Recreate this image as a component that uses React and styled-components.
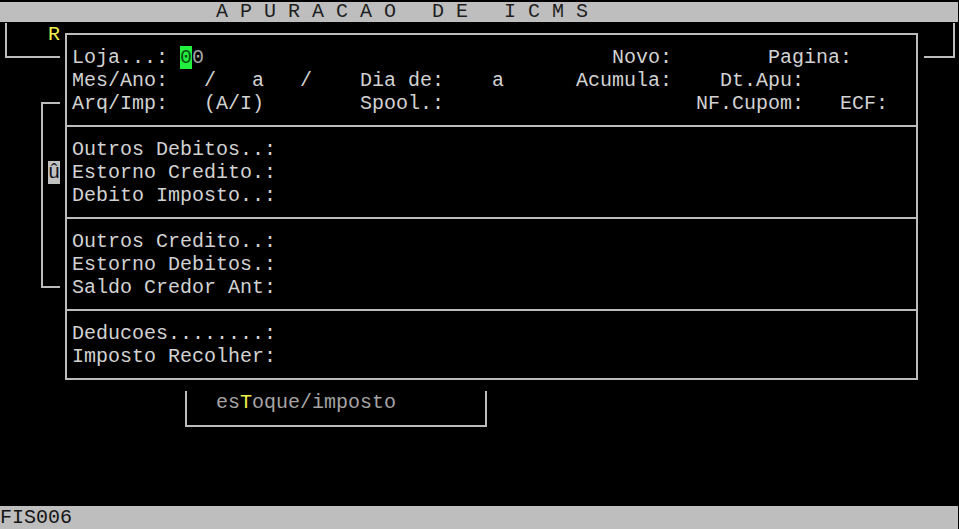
import React from 'react';
import styled, { createGlobalStyle } from 'styled-components';

const GlobalStyle = createGlobalStyle`
  html, body {
    margin: 0;
    padding: 0;
    background: #000;
    overflow: hidden;
  }
`;

// terminal cell grid: 80 cols x 23 rows, 12x23 px per cell
const place = ({ $row = 0, $col = 0, $w = 1, $h = 1 }) =>
  `grid-row: ${$row + 1} / span ${$h}; grid-column: ${$col + 1} / span ${$w};`;

const LINE = '#bcbcbc';

const Screen = styled.div`
  width: 959px;
  height: 529px;
  overflow: hidden;
  background: #000;
  display: grid;
  grid-template-columns: repeat(80, 12px);
  grid-template-rows: repeat(23, 23px);
  font-family: "Courier New", "Nimbus Mono PS", "FreeMono", "Liberation Mono", monospace;
  font-size: 20px;
  line-height: 23px;
  color: #d2d2d2;
`;

const TitleBar = styled.div`
  grid-row: 1;
  grid-column: 1 / span 80;
  margin: 2px 2px 1px 0;
  background: #bebebe;
  color: #1e1e1e;
  line-height: 20px;
  padding-left: 216px;
  white-space: pre;
`;

const StatusBar = styled.div`
  grid-row: 23;
  grid-column: 1 / span 80;
  margin-right: 2px;
  background: #bebebe;
  color: #141414;
  white-space: pre;
`;

const CornerFrame = styled.div`
  ${place};
  margin: 0 ${p => (p.$side === 'right' ? '5px' : '0')} 11px ${p => (p.$side === 'left' ? '5px' : '0')};
  border-bottom: 2px solid ${LINE};
  ${p => (p.$side === 'left' ? `border-left: 2px solid ${LINE};` : `border-right: 2px solid ${LINE};`)}
`;

const SideFrame = styled.div`
  ${place};
  margin: 10px 0 11px 5px;
  border: 2px solid ${LINE};
  border-right: none;
`;

const TrayFrame = styled.div`
  ${place};
  margin: 0 5px 10px 5px;
  border: 2px solid ${LINE};
  border-top: none;
`;

const MainBox = styled.div`
  ${place};
  margin: 10px 6px 11px 5px;
  border: 2px solid ${LINE};
`;

const Rule = styled.div`
  ${place};
  align-self: start;
  margin: 10px 6px 0 5px;
  height: 2px;
  background: ${LINE};
`;

const Label = styled.span`
  ${place};
  white-space: pre;
  color: ${p => p.$color || 'inherit'};
`;

const Hot = styled.span`
  color: #eeee4a;
`;

const Cursor = styled.span`
  ${place};
  background: #22ef3e;
  color: #0b4a12;
`;

const Marker = styled.span`
  ${place};
  background: #c0c0c0;
  color: #10121c;
`;

const fields = [
  [2, 6, 'Loja...:'], [2, 51, 'Novo:'], [2, 64, 'Pagina:'],
  [3, 6, 'Mes/Ano:'], [3, 17, '/'], [3, 21, 'a'], [3, 25, '/'],
  [3, 30, 'Dia de:'], [3, 41, 'a'], [3, 48, 'Acumula:'], [3, 60, 'Dt.Apu:'],
  [4, 6, 'Arq/Imp:'], [4, 17, '(A/I)'], [4, 30, 'Spool.:'],
  [4, 58, 'NF.Cupom:'], [4, 70, 'ECF:'],
  [6, 6, 'Outros Debitos..:'], [7, 6, 'Estorno Credito.:'], [8, 6, 'Debito Imposto..:'],
  [10, 6, 'Outros Credito..:'], [11, 6, 'Estorno Debitos.:'], [12, 6, 'Saldo Credor Ant:'],
  [14, 6, 'Deducoes........:'], [15, 6, 'Imposto Recolher:'],
];

export default function App() {
  return (
    <>
      <GlobalStyle />
      <Screen>
        <TitleBar>A P U R A C A O   D E   I C M S</TitleBar>

        {/* janelas de tras */}
        <CornerFrame $side="left" $row={1} $col={0} $w={5} $h={2} />
        <Label $row={1} $col={4} $color="#eeee4a">R</Label>
        <CornerFrame $side="right" $row={1} $col={77} $w={3} $h={2} />
        <SideFrame $row={4} $col={3} $w={2} $h={9} />
        <Marker $row={7} $col={4}>û</Marker>
        <TrayFrame $row={17} $col={15} $w={26} $h={2} />
        <Label $row={17} $col={18} $w={15} $color="#a4a4a4">
          es<Hot>T</Hot>oque/imposto
        </Label>

        {/* janela principal */}
        <MainBox $row={1} $col={5} $w={72} $h={16} />
        <Rule $row={5} $col={5} $w={72} />
        <Rule $row={9} $col={5} $w={72} />
        <Rule $row={13} $col={5} $w={72} />

        {fields.map(([row, col, text]) => (
          <Label key={`${row}-${col}`} $row={row} $col={col} $w={text.length}>
            {text}
          </Label>
        ))}
        <Cursor $row={2} $col={15}>0</Cursor>
        <Label $row={2} $col={16} $color="#a8a8a8">0</Label>

        <StatusBar>FIS006</StatusBar>
      </Screen>
    </>
  );
}
